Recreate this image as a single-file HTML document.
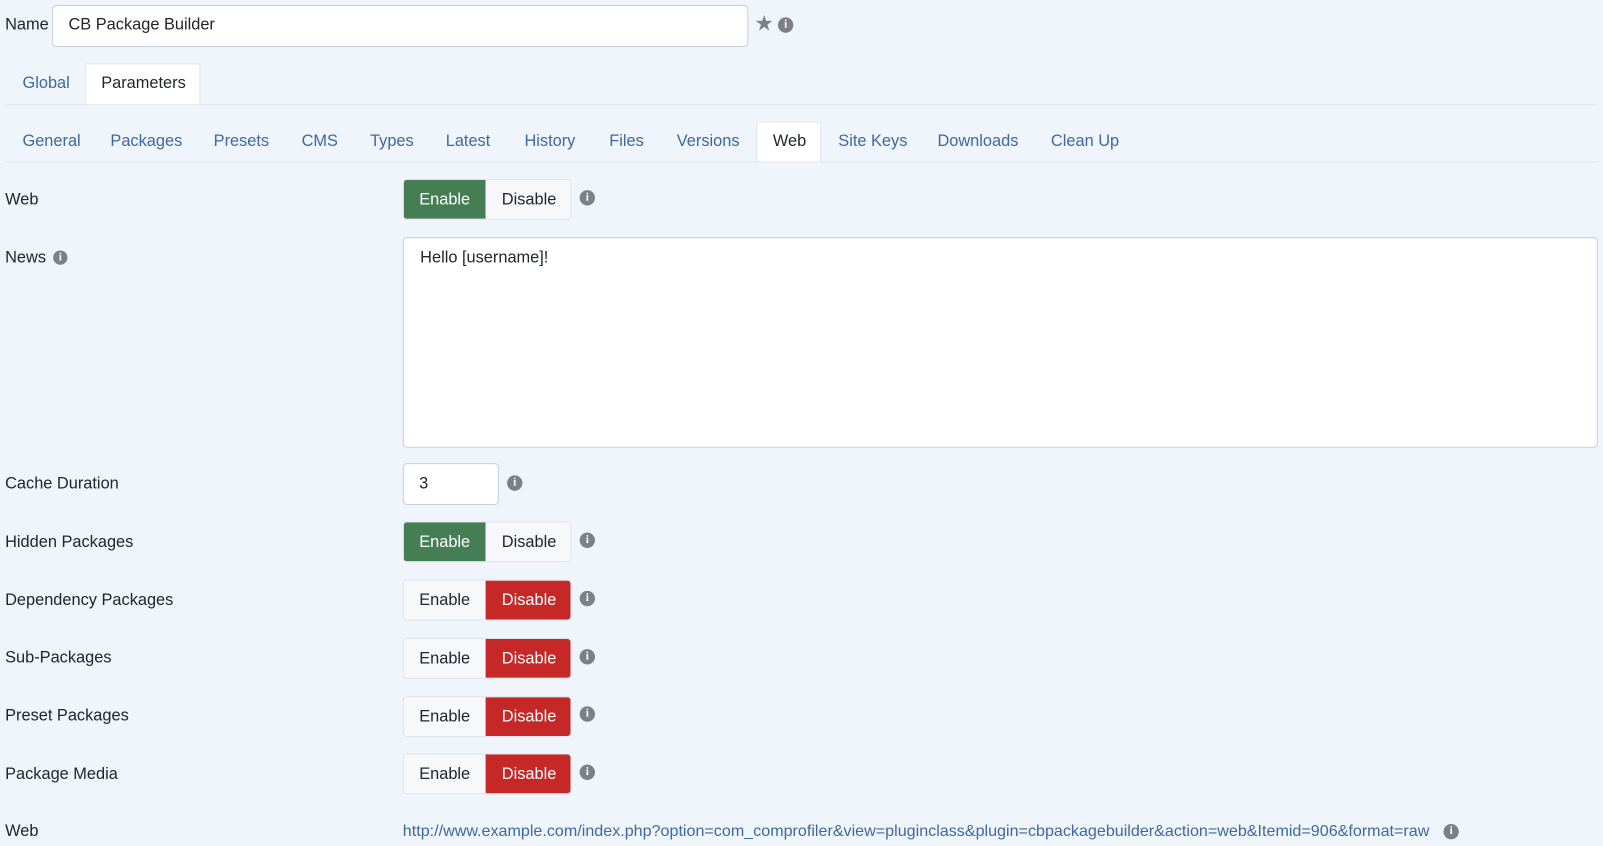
<!DOCTYPE html>
<html><head><style>
body{margin:0;width:1603px;height:846px;background:#f0f4fb;font-family:"Liberation Sans",sans-serif;font-size:16px;color:#22262a;position:relative;overflow:hidden}
#w{position:absolute;left:0;top:0;width:1568px;height:828px;transform:scale(1.0223);transform-origin:0 0}
.a{position:absolute;white-space:nowrap;margin-top:1px}
.b{position:absolute}
.lnk{color:#3d68a0}
.i{position:absolute;width:15px;height:15px;border-radius:50%;background:#7d8086;color:#fff;font:bold 11px/15px "Liberation Serif",serif;text-align:center}
.bg{position:absolute;left:394px;width:165px;height:40px;display:flex;border-radius:4px;overflow:hidden;border:1px solid #dfe3ea;box-sizing:border-box}
.bg div{flex:none;height:100%;line-height:40px;text-align:center;background:#f6f8fb}
.bg .e{width:80px}.bg .d{width:85px}
.g{background:#457d54!important;color:#fff}
.r{background:#c52827!important;color:#fff}
.inp{position:absolute;background:#fff;border:1px solid #c4cfe0;border-radius:4px;box-sizing:border-box}
</style></head><body><div id="w">
<div class="a" style="left:5px;top:15px">Name</div>
<div class="inp" style="left:51px;top:5px;width:681px;height:41px"></div>
<div class="a" style="left:67px;top:15px">CB Package Builder</div>
<div class="a" style="left:738px;top:10px;color:#7d8086;font-size:21px">★</div>
<div class="i" style="left:761px;top:17px">i</div>

<div class="a lnk" style="left:22px;top:72px">Global</div>
<div class="b" style="left:83px;top:62px;width:113px;height:41px;background:#fff;border:1px solid #e0e5ee;border-bottom:none;box-sizing:border-box"></div>
<div class="a" style="left:99px;top:72px">Parameters</div>
<div class="b" style="left:5px;top:102px;width:1558px;height:1px;background:#dfe4ec"></div>

<div class="b" style="left:740px;top:119px;width:63px;height:40px;background:#fff;border:1px solid #e0e5ee;border-bottom:none;box-sizing:border-box"></div>
<div class="a lnk" style="left:22px;top:129px">General</div>
<div class="a lnk" style="left:108px;top:129px">Packages</div>
<div class="a lnk" style="left:209px;top:129px">Presets</div>
<div class="a lnk" style="left:295px;top:129px">CMS</div>
<div class="a lnk" style="left:362px;top:129px">Types</div>
<div class="a lnk" style="left:436px;top:129px">Latest</div>
<div class="a lnk" style="left:513px;top:129px">History</div>
<div class="a lnk" style="left:596px;top:129px">Files</div>
<div class="a lnk" style="left:662px;top:129px">Versions</div>
<div class="a" style="left:756px;top:129px">Web</div>
<div class="a lnk" style="left:820px;top:129px">Site Keys</div>
<div class="a lnk" style="left:917px;top:129px">Downloads</div>
<div class="a lnk" style="left:1028px;top:129px">Clean Up</div>
<div class="b" style="left:5px;top:158px;width:1558px;height:1px;background:#dfe4ec"></div>

<div class="a" style="left:5px;top:186px">Web</div>
<div class="bg" style="top:175px"><div class="e g">Enable</div><div class="d">Disable</div></div>
<div class="i" style="left:567px;top:186px">i</div>

<div class="a" style="left:5px;top:243px">News</div>
<div class="i" style="left:52px;top:245px;width:14px;height:14px;line-height:14px">i</div>
<div class="inp" style="left:394px;top:232px;width:1169px;height:206px"></div>
<div class="a" style="left:411px;top:243px">Hello [username]!</div>

<div class="a" style="left:5px;top:464px">Cache Duration</div>
<div class="inp" style="left:394px;top:453px;width:94px;height:41px"></div>
<div class="a" style="left:410px;top:464px">3</div>
<div class="i" style="left:496px;top:465px">i</div>

<div class="a" style="left:5px;top:521px">Hidden Packages</div>
<div class="bg" style="top:510px"><div class="e g">Enable</div><div class="d">Disable</div></div>
<div class="i" style="left:567px;top:521px">i</div>

<div class="a" style="left:5px;top:578px">Dependency Packages</div>
<div class="bg" style="top:567px"><div class="e">Enable</div><div class="d r">Disable</div></div>
<div class="i" style="left:567px;top:578px">i</div>

<div class="a" style="left:5px;top:634px">Sub-Packages</div>
<div class="bg" style="top:624px"><div class="e">Enable</div><div class="d r">Disable</div></div>
<div class="i" style="left:567px;top:635px">i</div>

<div class="a" style="left:5px;top:691px">Preset Packages</div>
<div class="bg" style="top:681px"><div class="e">Enable</div><div class="d r">Disable</div></div>
<div class="i" style="left:567px;top:691px">i</div>

<div class="a" style="left:5px;top:748px">Package Media</div>
<div class="bg" style="top:737px"><div class="e">Enable</div><div class="d r">Disable</div></div>
<div class="i" style="left:567px;top:748px">i</div>

<div class="a" style="left:5px;top:804px">Web</div>
<div class="a lnk" style="left:394px;top:804px;font-size:15.75px">http://www.example.com/index.php?option=com_comprofiler&amp;view=pluginclass&amp;plugin=cbpackagebuilder&amp;action=web&amp;Itemid=906&amp;format=raw</div>
<div class="i" style="left:1412px;top:806px">i</div>
</div></body></html>
